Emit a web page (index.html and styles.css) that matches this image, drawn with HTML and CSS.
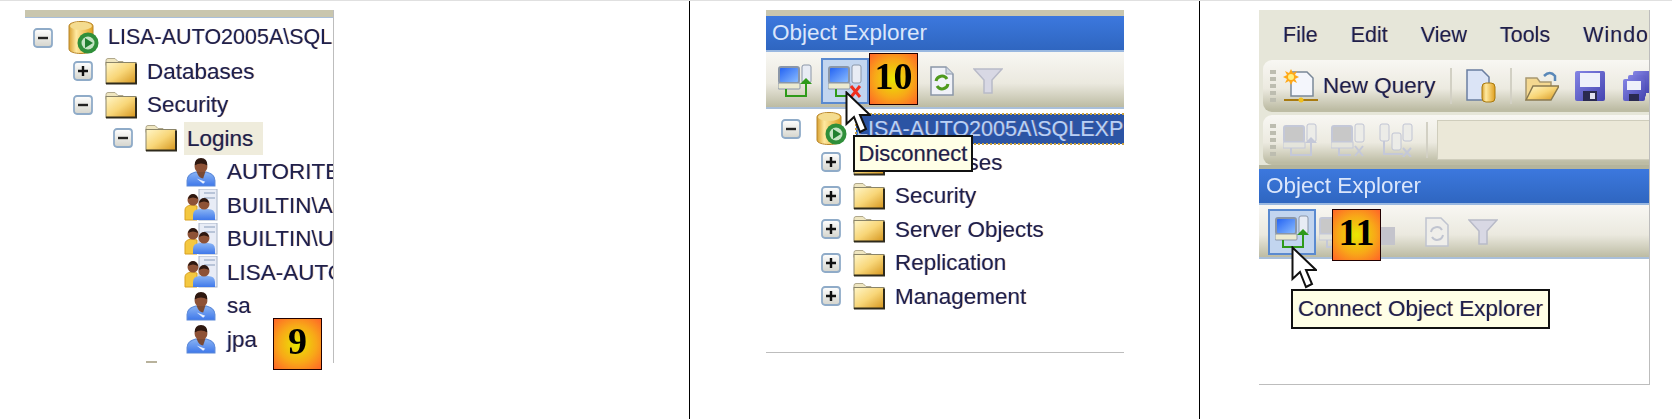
FILE: index.html
```html
<!DOCTYPE html>
<html lang="en">
<head>
<meta charset="utf-8">
<title>Object Explorer steps</title>
<link rel="stylesheet" href="styles.css">
</head>
<body>
<svg class="defs" width="0" height="0" aria-hidden="true">
  <defs>
    <linearGradient id="gFolder" x1="0" y1="0" x2="1" y2="1"><stop offset="0" stop-color="#fff6c8"/><stop offset=".5" stop-color="#f8d678"/><stop offset="1" stop-color="#d4941c"/></linearGradient>
    <linearGradient id="gCyl" x1="0" y1="0" x2="1" y2="0"><stop offset="0" stop-color="#d8a030"/><stop offset=".3" stop-color="#ffe9a0"/><stop offset="1" stop-color="#e0a020"/></linearGradient>
    <linearGradient id="gBody" x1="0" y1="0" x2="0" y2="1"><stop offset="0" stop-color="#8ab4f4"/><stop offset="1" stop-color="#3f78ea"/></linearGradient>
    <linearGradient id="gScreen" x1="0" y1="0" x2="1" y2="1"><stop offset="0" stop-color="#1f5ff2"/><stop offset="1" stop-color="#8fc0ff"/></linearGradient>
    <linearGradient id="gExp" x1="0" y1="0" x2="0" y2="1"><stop offset="0" stop-color="#fff"/><stop offset="1" stop-color="#d4d4cc"/></linearGradient>
    <linearGradient id="gSave" x1="0" y1="0" x2="1" y2="1"><stop offset="0" stop-color="#8484e4"/><stop offset="1" stop-color="#4444b0"/></linearGradient>
    <symbol id="minus" viewBox="0 0 20 20"><rect x="1" y="1" width="18" height="18" rx="3" fill="url(#gExp)" stroke="#8fabc8" stroke-width="1.800"/><path d="M5 10h10" stroke="#222" stroke-width="2.400"/></symbol>
    <symbol id="plus" viewBox="0 0 20 20"><rect x="1" y="1" width="18" height="18" rx="3" fill="url(#gExp)" stroke="#8fabc8" stroke-width="1.800"/><path d="M5 10h10M10 5v10" stroke="#111" stroke-width="2.400"/></symbol>
    <symbol id="folder" viewBox="0 0 32 27"><path d="M1 8V3q0-2 2-2h7l3 3h5v4z" fill="#efe6c0" stroke="#b0a88c"/><rect x="1" y="5" width="30" height="21" fill="url(#gFolder)" stroke="#8a8468"/><path d="M1 26H31V6" fill="none" stroke="#2e2a1c" stroke-width="2"/></symbol>
    <symbol id="server" viewBox="0 0 32 36"><path d="M1 6C1 0 25 0 25 6V29C25 35 1 35 1 29z" fill="url(#gCyl)" stroke="#b8862a"/><ellipse cx="13" cy="6" rx="11" ry="4" fill="#f4dc90"/><circle cx="20" cy="23" r="10.500" fill="#2f8f3a"/><circle cx="20" cy="23" r="6.500" fill="#c4e4c4"/><path d="M17 18l8 5-8 5z" fill="#1f7f30"/></symbol>
    <symbol id="user" viewBox="0 0 28 28"><path d="M1 27V22Q1 16 9 14H19Q27 16 27 22V27z" fill="url(#gBody)" stroke="#5a88d8"/><circle cx="14" cy="9" r="6" fill="#8e5236"/><path d="M8 8Q8 1 14 1T20 8Q14 4 8 8z" fill="#2e1810"/><path d="M10 14Q12 20 16 20L18 14z" fill="#7a4a34"/><path d="M10 20l8 3-2 2z" fill="#e8f0ff"/></symbol>
    <symbol id="group" viewBox="0 0 34 32"><rect x="15" y="0" width="18" height="31" fill="#e8ecf6" stroke="#a8b4c8"/><path d="M20 4h11M20 9h11" stroke="#b8c4d8" stroke-width="2"/><path d="M1 31V21Q1 17 7 16L13 17V31z" fill="#f4c840" stroke="#d8a020"/><circle cx="9" cy="11" r="5.500" fill="#8e5236"/><path d="M4 10Q5 5 9 5T14 10Q9 7 4 10z" fill="#2e1810"/><path d="M9 31V26Q9 20 16 20H24Q31 20 31 26V31z" fill="url(#gBody)"/><circle cx="20" cy="15" r="5.500" fill="#8e5236"/><path d="M15 14Q16 9 20 9T25 14Q20 11 15 14z" fill="#2e1810"/></symbol>
    <symbol id="connect" viewBox="0 0 34 34"><rect x="1" y="3" width="20" height="16" rx="2" fill="url(#gScreen)" stroke="#8a96a8" stroke-width="2"/><rect x="0" y="19" width="22" height="6" rx="1" fill="#ecead0" stroke="#8a96a8"/><rect x="24" y="1" width="9" height="18" rx="2" fill="#e8ecf4" stroke="#8a96a8"/><path d="M8 25v7h20V18" fill="none" stroke="#2f9a1a" stroke-width="2"/><path d="M22 20l6-6 6 6z" fill="#2f9a1a"/></symbol>
    <symbol id="disconnect" viewBox="0 0 34 34"><rect x="1" y="3" width="20" height="16" rx="2" fill="url(#gScreen)" stroke="#8a96a8" stroke-width="2"/><rect x="0" y="19" width="22" height="6" rx="1" fill="#ecead0" stroke="#8a96a8"/><rect x="24" y="1" width="9" height="18" rx="2" fill="#e8ecf4" stroke="#8a96a8"/><path d="M8 25v7h12" fill="none" stroke="#2f9a1a" stroke-width="2"/><path d="M23 22l9 11M32 22l-9 11" stroke="#f03020" stroke-width="3"/></symbol>
    <symbol id="refresh" viewBox="0 0 24 30"><path d="M1 1H16L23 8V29H1z" fill="#f0f2f8" stroke="#8a96a8" stroke-width="1.500"/><path d="M16 1v7h7" fill="#d0d8e4" stroke="#8a96a8"/><path d="M6 15a6 6 0 0 1 11-2M18 18a6 6 0 0 1-11 2" fill="none" stroke="#4f9a20" stroke-width="3"/></symbol>
    <symbol id="refresh-off" viewBox="0 0 24 30"><path d="M1 1H16L23 8V29H1z" fill="#efeeea" stroke="#c0c4d0" stroke-width="1.500"/><path d="M6 15a6 6 0 0 1 11-2M18 18a6 6 0 0 1-11 2" fill="none" stroke="#c0c4d0" stroke-width="2"/></symbol>
    <symbol id="funnel" viewBox="0 0 30 28"><path d="M1 2H29L19 13V26H11V13z" fill="#d8d8e4" stroke="#b8bac8" stroke-width="1.500"/></symbol>
    <symbol id="cursor" viewBox="0 0 26 44"><path d="M1.500 1.500V33L9 26L15 41L21 38L15 24H25z" fill="#fff" stroke="#111" stroke-width="2"/></symbol>
    <symbol id="newquery" viewBox="0 0 36 34"><path d="M8 3H24L30 9V27H8z" fill="#f4f6fc" stroke="#7a8898" stroke-width="1.500"/><path d="M8 0l2 4 4-2-2 4 4 2-4 2 2 4-4-2-2 4-2-4-4 2 2-4-4-2 4-2-2-4 4 2z" fill="#ffa818"/><circle cx="8" cy="8" r="3" fill="#fff080"/><path d="M1 31H35" stroke="#a87a10" stroke-width="2"/><circle cx="18" cy="31" r="2.500" fill="#f0c020"/></symbol>
    <symbol id="docdb" viewBox="0 0 30 34"><path d="M1 1H16L23 8V31H1z" fill="#dbe4f6" stroke="#6a7ea0" stroke-width="1.500"/><rect x="16" y="14" width="13" height="19" rx="4" fill="url(#gCyl)" stroke="#a87a10"/></symbol>
    <symbol id="open" viewBox="0 0 34 32"><path d="M1 30V8H12L15 12H26V16" fill="#f4d890" stroke="#a89870" stroke-width="1.500"/><path d="M1 30L8 16H34L26 30z" fill="url(#gFolder)" stroke="#8a7a50" stroke-width="1.500"/><path d="M19 6Q25 0 30 6V11" fill="none" stroke="#5a88b8" stroke-width="2.500"/></symbol>
    <symbol id="save" viewBox="0 0 30 30"><rect x="0" y="0" width="30" height="30" rx="2" fill="url(#gSave)"/><rect x="5" y="2" width="20" height="14" fill="#eef0fa"/><rect x="8" y="20" width="14" height="10" fill="#2a2a50"/><rect x="15" y="22" width="5" height="6" fill="#e0e0f0"/></symbol>
    <symbol id="saveall" viewBox="0 0 26 30"><rect x="10" y="0" width="18" height="22" rx="2" fill="url(#gSave)"/><rect x="5" y="4" width="18" height="22" rx="2" fill="url(#gSave)"/><rect x="0" y="8" width="22" height="22" rx="2" fill="url(#gSave)"/><rect x="4" y="10" width="14" height="9" fill="#eef0fa"/><rect x="6" y="23" width="10" height="7" fill="#2a2a50"/></symbol>
    <symbol id="off-connect" viewBox="0 0 34 34"><rect x="1" y="3" width="20" height="16" rx="2" fill="#c8c8c8" stroke="#c4c8d8" stroke-width="2"/><rect x="0" y="19" width="22" height="6" fill="#e4e4dc" stroke="#c4c8d8"/><rect x="24" y="1" width="9" height="18" rx="2" fill="#ecece8" stroke="#c0c4d4"/><path d="M8 25v7h20V18" fill="none" stroke="#c4c8d8" stroke-width="2"/><path d="M22 20l6-6 6 6z" fill="#c4c8d8"/></symbol>
    <symbol id="off-disconnect" viewBox="0 0 34 34"><rect x="1" y="3" width="20" height="16" rx="2" fill="#c8c8c8" stroke="#c4c8d8" stroke-width="2"/><rect x="0" y="19" width="22" height="6" fill="#e4e4dc" stroke="#c4c8d8"/><rect x="24" y="1" width="9" height="18" rx="2" fill="#ecece8" stroke="#c0c4d4"/><path d="M8 25v7h12" fill="none" stroke="#c4c8d8" stroke-width="2"/><path d="M24 23l8 10M32 23l-8 10" stroke="#c4c8d8" stroke-width="2"/></symbol>
    <symbol id="off-tree" viewBox="0 0 34 34"><rect x="1" y="1" width="9" height="17" rx="2" fill="#ecece8" stroke="#c0c4d4"/><rect x="24" y="1" width="9" height="17" rx="2" fill="#ecece8" stroke="#c0c4d4"/><rect x="13" y="10" width="9" height="17" rx="2" fill="#ecece8" stroke="#c0c4d4"/><path d="M5 18V31H24" fill="none" stroke="#c4c8d8" stroke-width="2"/><path d="M24 25l8 9M32 25l-8 9" stroke="#c4c8d8" stroke-width="2"/></symbol>
  </defs>
</svg>

<main class="steps">
  <section class="cell cell-one">
    <div class="shot shot-one">
      <div class="screen">
        <div class="topbar"></div>
        <ul class="tree">
          <li class="node"><svg class="exp"><use href="#minus"/></svg><svg class="ico ico-server"><use href="#server"/></svg><span class="lbl lbl-server">LISA-AUTO2005A\SQL</span></li>
          <li class="node lv1"><svg class="exp"><use href="#plus"/></svg><svg class="ico"><use href="#folder"/></svg><span class="lbl">Databases</span></li>
          <li class="node lv1"><svg class="exp"><use href="#minus"/></svg><svg class="ico"><use href="#folder"/></svg><span class="lbl">Security</span></li>
          <li class="node lv2"><svg class="exp"><use href="#minus"/></svg><svg class="ico"><use href="#folder"/></svg><span class="lbl hilite">Logins</span></li>
          <li class="node lv3"><span class="exp"></span><svg class="ico"><use href="#user"/></svg><span class="lbl">AUTORITE</span></li>
          <li class="node lv3"><span class="exp"></span><svg class="ico ico-group"><use href="#group"/></svg><span class="lbl">BUILTIN\A</span></li>
          <li class="node lv3"><span class="exp"></span><svg class="ico ico-group"><use href="#group"/></svg><span class="lbl">BUILTIN\U</span></li>
          <li class="node lv3"><span class="exp"></span><svg class="ico ico-group"><use href="#group"/></svg><span class="lbl">LISA-AUTO</span></li>
          <li class="node lv3"><span class="exp"></span><svg class="ico"><use href="#user"/></svg><span class="lbl">sa</span></li>
          <li class="node lv3"><span class="exp"></span><svg class="ico"><use href="#user"/></svg><span class="lbl">jpa</span></li>
        </ul>
        <div class="tick"></div>
      </div>
      <div class="badge badge-one">9</div>
    </div>
  </section>

  <section class="cell cell-two">
    <div class="shot shot-two">
      <div class="screen">
        <div class="topstrip"></div>
        <div class="title">Object Explorer</div>
        <div class="oe-bar oe-bar-two">
          <svg class="tool"><use href="#connect"/></svg>
          <span class="hot"><svg class="tool"><use href="#disconnect"/></svg></span>
          <svg class="tool-refresh"><use href="#refresh"/></svg>
          <svg class="tool-funnel"><use href="#funnel"/></svg>
        </div>
        <ul class="tree tree-two">
          <li class="node"><svg class="exp"><use href="#minus"/></svg><svg class="ico ico-server"><use href="#server"/></svg><span class="lbl lbl-server selected">LISA-AUTO2005A\SQLEXPR</span></li>
          <li class="node lv1"><svg class="exp"><use href="#plus"/></svg><svg class="ico"><use href="#folder"/></svg><span class="lbl">Databases</span></li>
          <li class="node lv1"><svg class="exp"><use href="#plus"/></svg><svg class="ico"><use href="#folder"/></svg><span class="lbl">Security</span></li>
          <li class="node lv1"><svg class="exp"><use href="#plus"/></svg><svg class="ico"><use href="#folder"/></svg><span class="lbl">Server Objects</span></li>
          <li class="node lv1"><svg class="exp"><use href="#plus"/></svg><svg class="ico"><use href="#folder"/></svg><span class="lbl">Replication</span></li>
          <li class="node lv1"><svg class="exp"><use href="#plus"/></svg><svg class="ico"><use href="#folder"/></svg><span class="lbl">Management</span></li>
        </ul>
        <div class="tip tip-two">Disconnect</div>
        <svg class="cursor cursor-two"><use href="#cursor"/></svg>
      </div>
      <div class="badge badge-two">10</div>
    </div>
  </section>

  <section class="cell cell-three">
    <div class="shot shot-three">
      <div class="screen">
        <nav class="menu"><span>File</span><span>Edit</span><span>View</span><span>Tools</span><span class="menu-last">Windo</span></nav>
        <div class="strip strip-one">
          <i class="grip"></i>
          <svg class="tool-wide"><use href="#newquery"/></svg>
          <span class="newq">New Query</span>
          <i class="sep sep-a"></i>
          <svg class="tool-doc"><use href="#docdb"/></svg>
          <i class="sep sep-b"></i>
          <svg class="tool-open"><use href="#open"/></svg>
          <svg class="tool-save"><use href="#save"/></svg>
          <svg class="tool-saveall"><use href="#saveall"/></svg>
        </div>
        <div class="strip strip-two">
          <i class="grip"></i>
          <svg class="tool-off"><use href="#off-connect"/></svg>
          <svg class="tool-off"><use href="#off-disconnect"/></svg>
          <svg class="tool-off"><use href="#off-tree"/></svg>
          <i class="sep sep-c"></i>
          <span class="combo"></span>
        </div>
        <div class="band"></div>
        <div class="title title-three">Object Explorer</div>
        <div class="oe-bar oe-bar-three">
          <span class="hot"><svg class="tool"><use href="#connect"/></svg></span>
          <svg class="tool-off ghost"><use href="#off-disconnect"/></svg>
          <span class="ghost-block"></span>
          <svg class="tool-refresh"><use href="#refresh-off"/></svg>
          <svg class="tool-funnel"><use href="#funnel"/></svg>
        </div>
        <div class="tip tip-three">Connect Object Explorer</div>
        <svg class="cursor cursor-three"><use href="#cursor"/></svg>
      </div>
      <div class="badge badge-three">11</div>
    </div>
  </section>
</main>
</body>
</html>
```

FILE: styles.css
```css
* { box-sizing: border-box; }
html, body { margin: 0; padding: 0; background: #fff; }
body { width: 1672px; height: 419px; overflow: hidden; font-family: "Liberation Sans", Arial, sans-serif; color: #20204a; }
.defs { display: block; }
.steps { display: flex; height: 419px; border-top: 1px solid #e0e0e0; }
.cell { height: 418px; padding-top: 9px; flex: none; }
.cell-one { width: 690px; padding-left: 25px; border-right: 1px solid #000; }
.cell-two { width: 510px; padding-left: 76px; border-right: 1px solid #000; }
.cell-three { width: 472px; padding-left: 59px; }

.shot { position: relative; }
.screen { filter: blur(.55px); height: 100%; overflow: hidden; position: relative; }
.shot-one { width: 309px; height: 353px; border-right: 1px solid #bdbdbd; }
.shot-two { width: 358px; height: 343px; border-bottom: 1px solid #bdbdbd; }
.shot-three { width: 391px; height: 375px; border-right: 1px solid #bdbdbd; border-bottom: 1px solid #bdbdbd; }

.topbar { height: 8px; background: #c9c6ae; border-bottom: 1px solid #a9bfda; }
.tree { list-style: none; margin: 0; padding: 3px 0 0 8px; }
.node { display: flex; align-items: center; height: 33.5px; white-space: nowrap; font-size: 22.5px; }
.lv1 { padding-left: 40px; }
.lv2 { padding-left: 80px; }
.lv3 { padding-left: 120px; }
.exp { display: block; width: 20px; height: 20px; flex: none; margin-right: 12px; }
.ico { display: block; width: 32px; height: 30px; flex: none; margin-right: 10px; }
.ico-server { height: 36px; margin-left: 3px; margin-right: 8px; }
.ico-group { width: 34px; height: 32px; margin-left: -1px; margin-right: 9px; }
.lbl, .menu, .newq, .tip { text-shadow: .7px 0 rgba(230, 150, 60, .35), -.7px 0 rgba(70, 110, 230, .35); }
.lbl { line-height: 33px; }
.lbl-server { font-size: 21.5px; }
.hilite { background: #efecdc; padding: 0 10px 0 3px; margin-left: -3px; }
.tick { position: absolute; left: 121px; top: 351px; width: 11px; height: 2px; background: #b8b29c; }

.topstrip { height: 6px; background: #c9c6ae; }
.title { height: 36px; background: linear-gradient(#3c78de, #2f66c0); color: #dbe6fb; font-size: 22.5px; line-height: 33px; padding-left: 6px; border-bottom: 2px solid #9ab8e0; white-space: nowrap; }
.oe-bar { display: flex; align-items: center; height: 57px; background: linear-gradient(#f8f7f3, #ebe9df 55%, #bdbca4 96%, #a9bfda 97%); }
.oe-bar-two { padding-left: 12px; }
.tool { display: block; width: 34px; height: 34px; flex: none; }
.hot { display: flex; align-items: center; justify-content: center; width: 48px; height: 46px; background: #c2d5ef; border: 2px solid #5a8ad0; margin-left: 9px; flex: none; }
.tool-refresh { display: block; width: 24px; height: 30px; flex: none; margin-left: 61px; }
.tool-funnel { display: block; width: 30px; height: 28px; flex: none; margin-left: 19px; }
.tree-two { padding: 3px 0 0 15px; height: 248px; }
.selected { background: #2b54a4; color: #b8d0f8; outline: 2px dotted #c8a040; outline-offset: -1px; line-height: 30px; padding-right: 40px; }

.tip { position: absolute; background: #ffffe6; border: 2px solid #111; font-size: 22px; display: flex; align-items: center; justify-content: center; white-space: nowrap; }
.tip-two { left: 87px; top: 125px; width: 120px; height: 37px; }
.tip-three { left: 32px; top: 279px; width: 259px; height: 40px; font-size: 22.5px; }
.cursor { position: absolute; width: 26px; height: 44px; }
.cursor-two { left: 79px; top: 81px; }
.cursor-three { left: 32px; top: 236px; }

.badge { position: absolute; width: 49px; height: 52px; border: 1px solid #200; background: radial-gradient(circle, #e8e800 0%, #f8a818 55%, #ff6428 100%); color: #000; font-family: "Liberation Serif", serif; font-weight: bold; font-size: 38px; line-height: 44px; text-align: center; }
.badge-one { left: 248px; top: 308px; }
.badge-two { left: 103px; top: 43px; }
.badge-three { left: 73px; top: 199px; }

.menu { display: flex; gap: 33px; height: 50px; background: #e6e6d9; padding-left: 24px; font-size: 21.5px; line-height: 50px; white-space: nowrap; overflow: hidden; }
.menu-last { letter-spacing: 1px; }
.strip { display: flex; align-items: center; margin-left: 4px; border-radius: 9px 0 0 9px; background: linear-gradient(#f8f7f3, #eceae0 55%, #bdbca4 95%); overflow: hidden; white-space: nowrap; }
.strip-one { height: 52px; }
.strip-two { height: 50px; margin-top: 3px; }
.shot-three .screen { background: linear-gradient(#e6e6d9, #e6e6d9 165px, #fff 165px); }
.grip { display: block; width: 6px; height: 32px; margin-left: 7px; flex: none; background: repeating-linear-gradient(#bdbdb0 0 4px, transparent 4px 7px); }
.tool-wide { display: block; width: 36px; height: 34px; flex: none; margin-left: 7px; }
.newq { font-size: 22.5px; margin-left: 4px; width: 115px; flex: none; }
.sep { display: block; width: 2px; height: 36px; background: #d2d0c4; flex: none; }
.sep-a { margin-left: 12px; }
.tool-doc { display: block; width: 30px; height: 34px; flex: none; margin-left: 14px; }
.sep-b { margin-left: 14px; }
.tool-open { display: block; width: 34px; height: 32px; flex: none; margin-left: 13px; }
.tool-save { display: block; width: 30px; height: 30px; flex: none; margin-left: 16px; }
.tool-saveall { display: block; width: 26px; height: 30px; flex: none; margin-left: 18px; }
.tool-off { display: block; width: 34px; height: 34px; flex: none; margin-left: 14px; }
.strip-two .grip + .tool-off { margin-left: 7px; }
.sep-c { margin-left: 13px; }
.combo { display: block; width: 220px; height: 40px; margin-left: 9px; background: #ebe8d8; border: 1px solid #cfcdbc; flex: none; }
.band { height: 4px; background: #b4b49c; }
.title-three { padding-left: 7px; }
.oe-bar-three { height: 54px; }
.ghost { margin-left: 3px; }
.ghost-block { display: block; width: 22px; height: 18px; background: #c4c4cc; flex: none; margin-top: 8px; margin-left: 20px; }
.oe-bar-three .tool-refresh { margin-left: 30px; }
```
